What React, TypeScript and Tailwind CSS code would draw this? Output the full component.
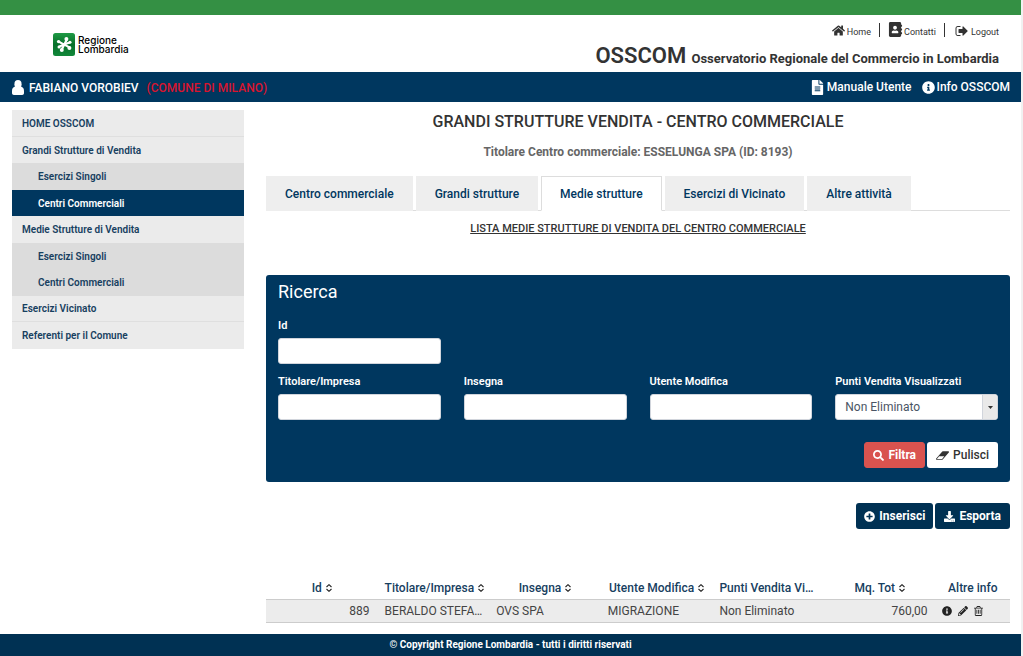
import { useState } from 'react';
import clsx from 'clsx';
import {
  FaHome,
  FaAddressBook,
  FaFileAlt,
  FaInfoCircle,
  FaSearch,
  FaPlusCircle,
  FaDownload,
  FaPencilAlt,
} from 'react-icons/fa';

const menu = [
  { label: 'HOME OSSCOM' },
  { label: 'Grandi Strutture di Vendita' },
  { label: 'Esercizi Singoli', sub: true },
  { label: 'Centri Commerciali', sub: true, active: true },
  { label: 'Medie Strutture di Vendita' },
  { label: 'Esercizi Singoli', sub: true },
  { label: 'Centri Commerciali', sub: true },
  { label: 'Esercizi Vicinato', line: true },
  { label: 'Referenti per il Comune' },
];

const tabs = [
  'Centro commerciale',
  'Grandi strutture',
  'Medie strutture',
  'Esercizi di Vicinato',
  'Altre attività',
];

const columns = [
  { label: 'Id', sortable: true },
  { label: 'Titolare/Impresa', sortable: true },
  { label: 'Insegna', sortable: true },
  { label: 'Utente Modifica', sortable: true },
  { label: 'Punti Vendita Visualizzati', sortable: false },
  { label: 'Mq. Tot', sortable: true },
];

const rows = [
  {
    id: 889,
    titolare: 'BERALDO STEFANO',
    insegna: 'OVS SPA',
    utente: 'MIGRAZIONE',
    stato: 'Non Eliminato',
    mq: '760,00',
  },
];

function Logo() {
  return (
    <a href="#" className="flex items-center gap-[3px] text-black" aria-label="Regione Lombardia">
      <svg viewBox="0 0 22 23" className="h-[23px] w-[22px]">
        <defs>
          <linearGradient id="logo-green" x1="0" y1="0" x2="0" y2="1">
            <stop offset="0" stopColor="#1f9a45" />
            <stop offset="0.5" stopColor="#07702a" />
            <stop offset="1" stopColor="#12883a" />
          </linearGradient>
        </defs>
        <rect width="22" height="23" rx="2.5" fill="url(#logo-green)" />
        <g stroke="#fff" strokeWidth="2.2" strokeLinecap="round">
          <path d="M14 6.200 8.600 16.800" />
          <path d="M5.600 8.600 17 14.600" />
          <path d="M6 13.800 11 11.600" />
          <path d="M11 11.600 16.600 9.400" />
        </g>
        <g fill="#fff">
          <circle cx="13.400" cy="6" r="2" />
          <circle cx="8.800" cy="17" r="2" />
          <circle cx="5.600" cy="8.600" r="1.700" />
          <circle cx="16.400" cy="15" r="2" />
          <circle cx="6" cy="14" r="1.500" />
          <circle cx="17" cy="9.200" r="1.500" />
        </g>
      </svg>
      <span className="flex flex-col font-[Inter,sans-serif] text-[10px] leading-[9px] font-medium">
        <span>Regione</span>
        <span>Lombardia</span>
      </span>
    </a>
  );
}

function UserIcon() {
  return (
    <svg viewBox="0 0 12 15" className="h-[15px] w-3" fill="currentColor">
      <ellipse cx="6" cy="4.200" rx="3.600" ry="4.200" />
      <path d="M2.400 6.800C.8 7.400 0 9 0 11.200v1.900C0 14.300.8 15 1.900 15h8.200c1.100 0 1.900-.7 1.900-1.900v-1.900c0-2.200-.8-3.800-2.400-4.400z" />
    </svg>
  );
}

function SignOutIcon() {
  return (
    <svg viewBox="0 128 1664 1536" className="h-3 w-[13px]" fill="currentColor">
      <path d="M704 1440q0 4 1 20t.5 26.500-3 23.500-10 19.500-20.500 6.500h-320q-119 0-203.500-84.500t-84.500-203.500v-704q0-119 84.500-203.500t203.500-84.500h320q13 0 22.500 9.500t9.500 22.500q0 4 1 20t.5 26.500-3 23.500-10 19.500-20.500 6.500h-320q-66 0-113 47t-47 113v704q0 66 47 113t113 47h312l11.500 1 11.500 3 8 5.500 7 9 2 13.500zm928-544q0 26-19 45l-544 544q-19 19-45 19t-45-19-19-45v-288h-448q-26 0-45-19t-19-45v-384q0-26 19-45t45-19h448v-288q0-26 19-45t45-19 45 19l544 544q19 19 19 45z" />
    </svg>
  );
}

function EraserIcon() {
  return (
    <svg viewBox="0 256 1920 1280" className="h-[9px] w-[13px]" fill="currentColor">
      <path d="M896 1408l336-384h-768l-336 384h768zm1013-1077q15 34 9.500 71.500t-30.500 65.500l-896 1024q-38 44-96 44h-768q-38 0-69.500-20.500t-47.500-54.500q-15-34-9.500-71.500t30.500-65.500l896-1024q38-44 96-44h768q38 0 69.500 20.500t47.500 54.500z" />
    </svg>
  );
}

function TrashIcon() {
  return (
    <svg viewBox="192 128 1408 1536" className="h-[10px] w-[9px]" fill="currentColor">
      <path d="M704 736v576q0 14-9 23t-23 9h-64q-14 0-23-9t-9-23v-576q0-14 9-23t23-9h64q14 0 23 9t9 23zm256 0v576q0 14-9 23t-23 9h-64q-14 0-23-9t-9-23v-576q0-14 9-23t23-9h64q14 0 23 9t9 23zm256 0v576q0 14-9 23t-23 9h-64q-14 0-23-9t-9-23v-576q0-14 9-23t23-9h64q14 0 23 9t9 23zm128 724v-948h-896v948q0 22 7 40.500t14.500 27 10.500 8.500h832q3 0 10.500-8.500t14.500-27 7-40.500zm-672-1076h448l-48-117q-7-9-17-11h-317q-10 2-17 11zm928 32v64q0 14-9 23t-23 9h-96v948q0 83-47 143.500t-113 60.500h-832q-66 0-113-58.500t-47-141.500v-952h-96q-14 0-23-9t-9-23v-64q0-14 9-23t23-9h309l70-167q15-37 54-63t79-26h320q40 0 79 26t54 63l70 167h309q14 0 23 9t9 23z" />
    </svg>
  );
}

function SortIcon() {
  return (
    <svg viewBox="0 0 6 8" className="h-2 w-[6px]" fill="none" stroke="#222" strokeWidth="1.1">
      <path d="M.5 3 3 .7 5.500 3" />
      <path d="M.5 5 3 7.300 5.500 5" />
    </svg>
  );
}

function Field({ id, label }: { id: string; label: string }) {
  return (
    <div>
      <label htmlFor={id} className="mb-1 block text-[11px] leading-4 font-semibold">
        {label}
      </label>
      <input
        id={id}
        type="text"
        className="block h-[26px] w-full rounded-[3px] border border-gray-300 bg-white px-2 text-xs text-gray-600"
      />
    </div>
  );
}

function App() {
  const [tab, setTab] = useState('Medie strutture');

  return (
    <div className="border-r-2 border-[#f1f1f1] bg-white font-[Roboto,sans-serif] text-[#333]">
      <div className="h-[15px] bg-[#349044]" />

      <header className="flex h-[57px] items-start justify-between pr-[22px] pl-[53px]">
        <div className="pt-[18px]">
          <Logo />
        </div>
        <div className="text-right">
          <nav className="flex h-7 items-center justify-end pt-px text-[9px]">
            <a href="#" className="flex h-[14px] items-end gap-[2px] border-r border-[#333] pr-2">
              <FaHome size={13} />
              <span className="leading-[10px]">Home</span>
            </a>
            <a href="#" className="flex h-[14px] items-end gap-px border-r border-[#333] px-2">
              <FaAddressBook size={15} />
              <span className="leading-[10px]">Contatti</span>
            </a>
            <a href="#" className="flex h-[14px] items-end gap-[3px] pl-[10px]">
              <SignOutIcon />
              <span className="leading-[10px]">Logout</span>
            </a>
          </nav>
          <h1 className="text-[13px] leading-[26px] font-bold">
            <span className="mr-[2px] text-[22px] font-semibold">OSSCOM</span> Osservatorio Regionale del Commercio in
            Lombardia
          </h1>
        </div>
      </header>

      <div className="flex h-[30px] items-center justify-between bg-[#00375f] pr-[11px] pl-3 text-xs font-medium text-white">
        <div className="flex items-center gap-[5px] pt-px">
          <UserIcon />
          <span>FABIANO VOROBIEV</span>
          <span className="ml-[3px] text-[#d9142e]">(COMUNE DI MILANO)</span>
        </div>
        <nav className="flex items-center gap-[10px]">
          <a href="#" className="flex items-center gap-[2px]">
            <FaFileAlt size={15} />
            Manuale Utente
          </a>
          <a href="#" className="flex items-center gap-[2px]">
            <FaInfoCircle size={13} />
            Info OSSCOM
          </a>
        </nav>
      </div>

      <div className="flex items-start gap-[22px] pt-2 pr-[11px] pb-[11px] pl-3">
        <aside className="w-[232px] shrink-0">
          <ul className="text-[10px] font-semibold text-[#17405f]">
            {menu.map((item, i) => (
              <li key={i} className="h-[26px] odd:h-[27px]">
                <a
                  href="#"
                  className={clsx(
                    'flex h-full items-center',
                    item.sub ? 'pl-[26px]' : 'pl-[10px]',
                    item.active ? 'bg-[#00375f] text-white' : item.sub ? 'bg-[#dcdcdc]' : 'bg-[#ebebeb]',
                    (i === 0 || item.line) && 'border-b border-[#dfdfdf]'
                  )}
                >
                  {item.label}
                </a>
              </li>
            ))}
          </ul>
        </aside>

        <main className="min-w-0 flex-1">
          <h2 className="pt-px text-center text-base leading-[22px] font-medium">
            GRANDI STRUTTURE VENDITA - CENTRO COMMERCIALE
          </h2>
          <h3 className="mt-[10px] text-center text-xs leading-[18px] font-bold text-[#666]">
            Titolare Centro commerciale: ESSELUNGA SPA (ID: 8193)
          </h3>

          <div role="tablist" className="mt-[15px] flex gap-[3px] border-b border-[#ddd]">
            {tabs.map(name => (
              <button
                key={name}
                type="button"
                role="tab"
                aria-selected={tab === name}
                onClick={() => setTab(name)}
                className={clsx(
                  '-mb-px h-[35px] border px-[18px] text-xs font-medium text-[#00375f]',
                  tab === name ? 'border-[#ddd] border-b-white bg-white' : 'border-[#eee] bg-[#eee]'
                )}
              >
                {name}
              </button>
            ))}
          </div>

          <h4 className="mt-[10px] text-center text-[11px] leading-4 font-medium underline">
            LISTA MEDIE STRUTTURE DI VENDITA DEL CENTRO COMMERCIALE
          </h4>

          <form
            className="mt-[38px] rounded-[3px] bg-[#00375f] px-3 pt-[6px] pb-[14px] text-white"
            onSubmit={e => e.preventDefault()}
          >
            <h3 className="text-lg leading-[22px]">Ricerca</h3>
            <div className="mt-[15px] grid grid-cols-4 gap-x-[23px] gap-y-[10px]">
              <div className="col-span-4 grid grid-cols-subgrid">
                <Field id="id" label="Id" />
              </div>
              <Field id="titolare" label="Titolare/Impresa" />
              <Field id="insegna" label="Insegna" />
              <Field id="utente" label="Utente Modifica" />
              <div>
                <label htmlFor="stato" className="mb-1 block text-[11px] leading-4 font-semibold">
                  Punti Vendita Visualizzati
                </label>
                <div className="relative">
                  <select
                    id="stato"
                    className="block h-[26px] w-full appearance-none rounded-[3px] border border-gray-300 bg-white pl-[9px] text-xs text-gray-600"
                  >
                    <option>Non Eliminato</option>
                    <option>Eliminato</option>
                  </select>
                  <span className="pointer-events-none absolute inset-y-px right-px flex w-[15px] items-center justify-center rounded-r-[2px] border-l border-gray-300 bg-[#e9e9e9]">
                    <svg viewBox="0 0 5 3" className="h-[3px] w-[5px]" fill="#333">
                      <path d="M0 0h5L2.500 3z" />
                    </svg>
                  </span>
                </div>
              </div>
            </div>
            <div className="mt-[22px] flex justify-end gap-[2px] text-xs">
              <button
                type="submit"
                className="flex h-[26px] items-center gap-1 rounded-[3px] border border-[#d9534f] bg-[#d9534f] px-2 font-bold"
              >
                <FaSearch size={11} />
                Filtra
              </button>
              <button
                type="reset"
                className="flex h-[26px] items-center gap-1 rounded-[3px] bg-white px-[9px] font-medium text-[#333]"
              >
                <EraserIcon />
                Pulisci
              </button>
            </div>
          </form>

          <div className="mt-[21px] flex justify-end gap-[2px] text-xs font-bold text-white">
            <button type="button" className="flex h-[26px] items-center gap-1 rounded-[3px] bg-[#003153] px-2">
              <FaPlusCircle size={11} />
              Inserisci
            </button>
            <button type="button" className="flex h-[26px] items-center gap-1 rounded-[3px] bg-[#003153] px-[9px]">
              <FaDownload size={11} />
              Esporta
            </button>
          </div>

          <table className="mt-[48px] w-full table-fixed text-xs">
            <thead>
              <tr className="h-[22px] border-b border-[#ccc] text-[#17405f]">
                {columns.map(col => (
                  <th key={col.label} scope="col" className="w-[15%] px-[7px] font-medium">
                    {col.sortable ? (
                      <button type="button" className="inline-flex items-center gap-1 whitespace-nowrap">
                        {col.label}
                        <SortIcon />
                      </button>
                    ) : (
                      <div className="truncate">{col.label}</div>
                    )}
                  </th>
                ))}
                <th scope="col" className="w-[10%] font-medium">
                  Altre info
                </th>
              </tr>
            </thead>
            <tbody>
              {rows.map(row => (
                <tr key={row.id} className="h-[23px] border-b border-[#ccc] bg-[#ececec] text-[#444]">
                  <td className="px-2 text-right">{row.id}</td>
                  <td className="truncate pr-1 pl-[7px]">{row.titolare}</td>
                  <td className="px-[7px]">{row.insegna}</td>
                  <td className="px-[7px]">{row.utente}</td>
                  <td className="px-[7px]">{row.stato}</td>
                  <td className="px-2 text-right">{row.mq}</td>
                  <td className="pl-[6px]">
                    <div className="flex items-center gap-[6px] text-[#222]">
                      <button type="button" aria-label="Dettaglio">
                        <FaInfoCircle size={10} />
                      </button>
                      <button type="button" aria-label="Modifica">
                        <FaPencilAlt size={10} />
                      </button>
                      <button type="button" aria-label="Elimina">
                        <TrashIcon />
                      </button>
                    </div>
                  </td>
                </tr>
              ))}
            </tbody>
          </table>
        </main>
      </div>

      <footer className="flex h-[22px] items-center justify-center bg-[#003153] text-[10px] font-bold text-white">
        © Copyright Regione Lombardia - tutti i diritti riservati
      </footer>
    </div>
  );
}

export default App;
